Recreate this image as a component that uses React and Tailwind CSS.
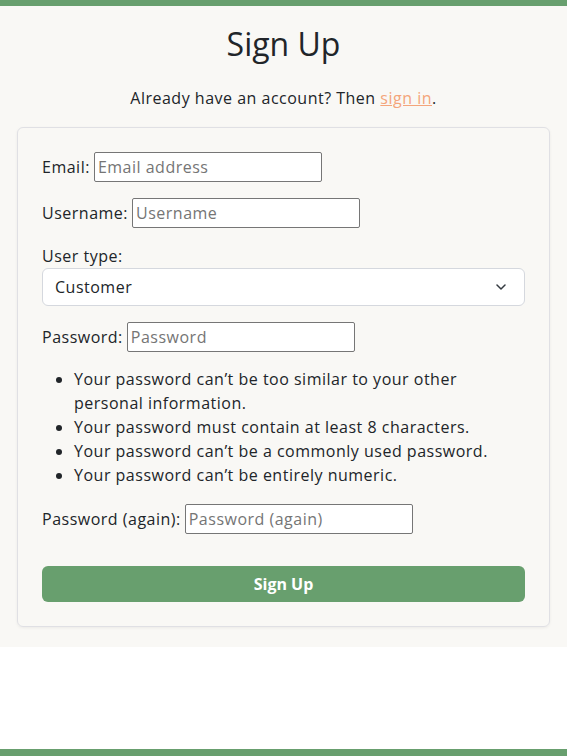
import React from "react";

function Chevron() {
  return (
    <svg width="10" height="6" viewBox="0 0 10 6" fill="none" className="pointer-events-none absolute right-[19px] top-[16px]">
      <path d="M1 1l4 4 4-4" stroke="#343a40" strokeWidth="1.5" strokeLinecap="round" strokeLinejoin="round" />
    </svg>
  );
}

function Field({ label, placeholder, type = "text" }) {
  return (
    <div className="flex items-center">
      <label className="mr-[4px]">{label}</label>
      <input
        type={type}
        placeholder={placeholder}
        className="h-[30px] w-[228px] rounded-[2px] border border-[#767676] bg-white px-[3px] text-[16px] tracking-[0.5px] text-[#212529] placeholder:text-[#757575] outline-none"
      />
    </div>
  );
}

export default function App() {
  return (
    <div className="min-h-[756px] flex flex-col bg-white text-[16px] leading-[24px] tracking-[0.5px] text-[#212529]" style={{ fontFamily: '"Open Sans", "Liberation Sans", sans-serif' }}>
      <div className="h-[6px] bg-[#689f6e]" />
      <main className="bg-[#f9f8f5] px-[17px] pt-[19px] pb-[20px]">
        <h1 className="text-center text-[32px] leading-[38px] font-normal tracking-normal">Sign Up</h1>
        <p className="mt-[23px] text-center">
          Already have an account? Then{" "}
          <a href="#" className="text-[#f4a57b] underline">sign in</a>.
        </p>
        <div className="mt-[17px] rounded-[6px] border border-[#e0e0e4] p-[24px] shadow-[0_1px_3px_rgba(0,0,0,0.06)]">
          <form className="flex flex-col" onSubmit={(e) => e.preventDefault()}>
            <Field label="Email:" placeholder="Email address" type="email" />
            <div className="mt-[16px]">
              <Field label="Username:" placeholder="Username" />
            </div>
            <div className="mt-[16px]">
              <label className="block">User type:</label>
              <div className="relative">
                <select className="h-[38px] w-full appearance-none rounded-[6px] border border-[#d5d8de] bg-white pl-[12px] pr-[36px] text-[16px] tracking-[0.5px] text-[#212529] outline-none">
                  <option>Customer</option>
                </select>
                <Chevron />
              </div>
            </div>
            <div className="mt-[16px]">
              <Field label="Password:" placeholder="Password" type="password" />
            </div>
            <ul className="mt-[15px] list-disc pl-[32px]">
              <li>Your password can’t be too similar to your other personal information.</li>
              <li>Your password must contain at least 8 characters.</li>
              <li>Your password can’t be a commonly used password.</li>
              <li>Your password can’t be entirely numeric.</li>
            </ul>
            <div className="mt-[17px]">
              <Field label="Password (again):" placeholder="Password (again)" type="password" />
            </div>
            <button type="submit" className="mt-[32px] h-[36px] w-full rounded-[6px] bg-[#689f6e] text-[16px] font-bold tracking-normal text-white">
              Sign Up
            </button>
          </form>
        </div>
      </main>
      <div className="flex-1" />
      <div className="h-[7px] bg-[#689f6e]" />
    </div>
  );
}
